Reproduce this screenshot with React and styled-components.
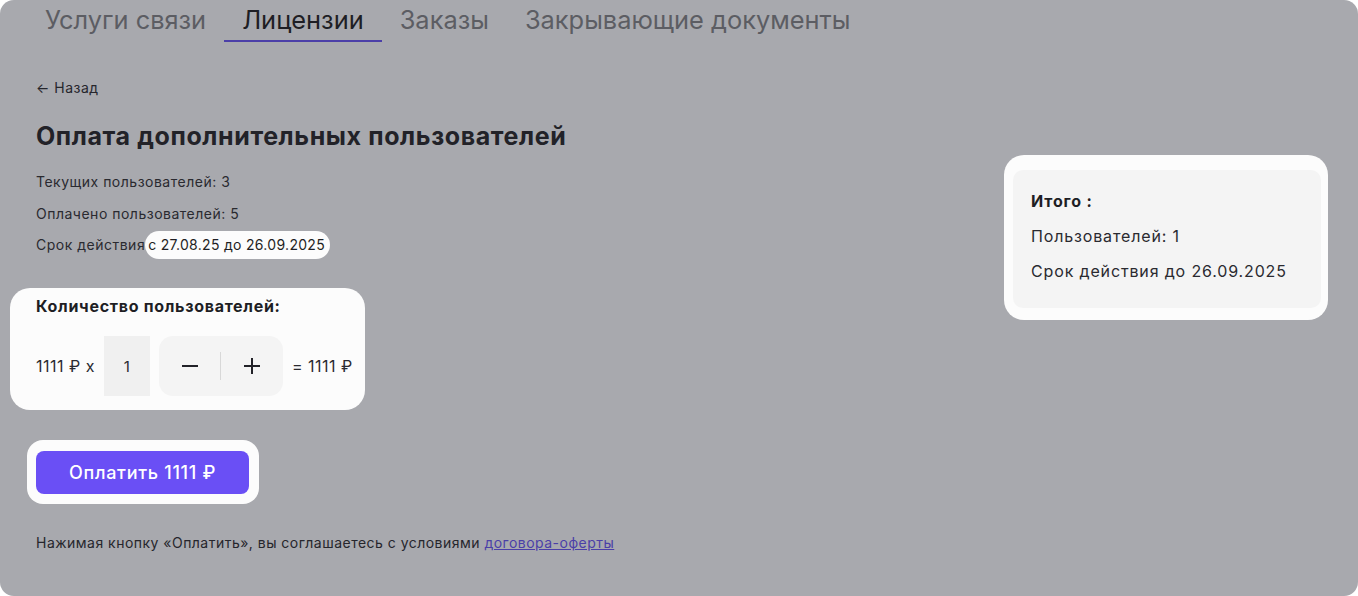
import React from 'react'
import styled, { createGlobalStyle } from 'styled-components'

const Global = createGlobalStyle`
  html, body { margin: 0; padding: 0; background: #ffffff; }
  body { font-family: Inter, "Noto Sans", sans-serif; }
`

const Panel = styled.div`
  width: 1358px;
  height: 596px;
  box-sizing: border-box;
  background: #a8a9ae;
  border-radius: 14px;
  overflow: hidden;
  padding: 0 30px 0 36px;
  color: #2a2a30;
`

const Tabs = styled.nav`
  display: flex;
  margin-left: -9px;
  height: 42px;
`

const Tab = styled.div`
  padding: 0 18px;
  height: 42px;
  box-sizing: border-box;
  font-size: 25.4px;
  line-height: 40px;
  color: ${p => (p.active ? '#1e1e24' : '#5c5d63')};
  border-bottom: 2px solid ${p => (p.active ? '#4b3fa8' : 'transparent')};
  white-space: nowrap;
`

const Body = styled.div`
  display: flex;
  justify-content: space-between;
  align-items: flex-start;
`

const Left = styled.div`
  display: flex;
  flex-direction: column;
  align-items: flex-start;
`

const Back = styled.div`
  margin-top: 37px;
  font-size: 14px;
  line-height: 18px;
  letter-spacing: 0.5px;
  color: #26262c;
`

const Title = styled.h1`
  margin: 24px 0 0;
  font-size: 25px;
  font-weight: 700;
  line-height: 30px;
  letter-spacing: 0.6px;
  color: #222228;
`

const Info = styled.div`
  font-size: 14px;
  line-height: 20px;
  letter-spacing: 0.5px;
  color: #2a2a30;
  margin-top: ${p => p.gap}px;
  display: flex;
  align-items: center;
`

const Spot = styled.span`
  background: #fcfcfc;
  border-radius: 14px;
  padding: 4px 5px 4px 3px;
  margin-left: 0;
  letter-spacing: 0.3px;
  color: #1f1f24;
`

const QtySpot = styled.div`
  margin: 29px 0 0 -26px;
  padding: 8px 12px 14px 26px;
  background: #fcfcfc;
  border-radius: 20px;
`

const QtyTitle = styled.div`
  font-size: 16px;
  font-weight: 700;
  line-height: 20px;
  letter-spacing: 0.7px;
  color: #1e1e24;
`

const QtyRow = styled.div`
  display: flex;
  align-items: center;
  margin-top: 20px;
  font-size: 16px;
  letter-spacing: 0.5px;
  color: #2a2a30;
`

const Price = styled.span`
  margin-right: ${p => p.mr || 0}px;
  margin-left: ${p => p.ml || 0}px;
`

const CountBox = styled.div`
  width: 46px;
  height: 60px;
  background: #f0f0f0;
  display: flex;
  align-items: center;
  justify-content: center;
  font-size: 15px;
`

const Stepper = styled.div`
  margin-left: 9px;
  width: 124px;
  height: 60px;
  background: #f4f4f4;
  border-radius: 14px;
  display: flex;
  align-items: center;
`

const StepBtn = styled.button`
  flex: 1;
  height: 100%;
  border: 0;
  background: transparent;
  display: flex;
  align-items: center;
  justify-content: center;
  padding: 0;
  cursor: pointer;
`

const Divider = styled.div`
  width: 1px;
  height: 28px;
  background: #d8d8d8;
`

const PaySpot = styled.div`
  margin: 30px 0 0 -9px;
  padding: 11px 10px 10px 9px;
  background: #fcfcfc;
  border-radius: 16px;
`

const PayButton = styled.button`
  width: 213px;
  height: 43px;
  border: 0;
  border-radius: 8px;
  background: #6a4ff5;
  color: #ffffff;
  font-family: Inter, "Noto Sans", sans-serif;
  font-size: 18px;
  font-weight: 500;
  letter-spacing: 0.7px;
`

const Note = styled.div`
  margin-top: 30px;
  font-size: 14px;
  line-height: 18px;
  letter-spacing: 0.48px;
  color: #26262c;
`

const Link = styled.a`
  color: #4b3fa8;
  text-decoration: underline;
`

const SummarySpot = styled.div`
  margin-top: 113px;
  width: 324px;
  box-sizing: border-box;
  padding: 15px 7px 12px 9px;
  background: #fcfcfc;
  border-radius: 20px;
`

const Summary = styled.div`
  background: #f4f4f4;
  border-radius: 10px;
  padding: 20px 18px 26px;
  color: #2a2a30;
  font-size: 16px;
  letter-spacing: 0.85px;
`

const SumTitle = styled.div`
  font-weight: 700;
  line-height: 22px;
  color: #1e1e24;
`

const SumLine = styled.div`
  margin-top: 13px;
  line-height: 22px;
`

const Minus = () => (
  <svg width="18" height="18" viewBox="0 0 18 18">
    <path d="M1 9h16" stroke="#222228" strokeWidth="2" />
  </svg>
)

const Plus = () => (
  <svg width="18" height="18" viewBox="0 0 18 18">
    <path d="M1 9h16M9 1v16" stroke="#222228" strokeWidth="2" />
  </svg>
)

export default function App() {
  return (
    <>
      <Global />
      <Panel>
        <Tabs>
          <Tab>Услуги связи</Tab>
          <Tab active>Лицензии</Tab>
          <Tab>Заказы</Tab>
          <Tab>Закрывающие документы</Tab>
        </Tabs>
        <Body>
          <Left>
            <Back>← Назад</Back>
            <Title>Оплата дополнительных пользователей</Title>
            <Info gap={21}>Текущих пользователей: 3</Info>
            <Info gap={12}>Оплачено пользователей: 5</Info>
            <Info gap={7}>
              Срок действия<Spot>с 27.08.25 до 26.09.2025</Spot>
            </Info>
            <QtySpot>
              <QtyTitle>Количество пользователей:</QtyTitle>
              <QtyRow>
                <Price mr={9}>1111 ₽ x</Price>
                <CountBox>1</CountBox>
                <Stepper>
                  <StepBtn><Minus /></StepBtn>
                  <Divider />
                  <StepBtn><Plus /></StepBtn>
                </Stepper>
                <Price ml={9}>= 1111 ₽</Price>
              </QtyRow>
            </QtySpot>
            <PaySpot>
              <PayButton>Оплатить 1111 ₽</PayButton>
            </PaySpot>
            <Note>
              Нажимая кнопку «Оплатить», вы соглашаетесь с условиями <Link>договора-оферты</Link>
            </Note>
          </Left>
          <SummarySpot>
            <Summary>
              <SumTitle>Итого :</SumTitle>
              <SumLine>Пользователей: 1</SumLine>
              <SumLine>Срок действия до 26.09.2025</SumLine>
            </Summary>
          </SummarySpot>
        </Body>
      </Panel>
    </>
  )
}
